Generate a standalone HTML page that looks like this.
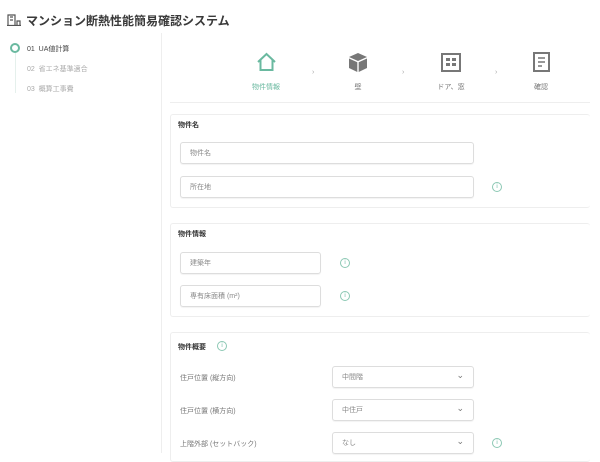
<!DOCTYPE html>
<html><head><meta charset="utf-8"><style>
*{box-sizing:border-box;margin:0;padding:0}
body{width:600px;height:451px;overflow:hidden;background:#fff;font-family:"Liberation Sans","Noto Sans CJK JP",sans-serif;color:#333;position:relative}
.a{position:absolute}
.t{font-size:7px;color:#666}
.card{position:absolute;left:170px;width:420px;border:1px solid #eee;border-right:none;border-radius:3px;background:#fff}
.h{position:absolute;font-size:7px;font-weight:bold;color:#333}
.in{position:absolute;border:1px solid #ddd;border-radius:3px;font-size:7px;color:#888;padding-left:9px;display:flex;align-items:center;box-shadow:0 1px 1px rgba(0,0,0,.05)}
.sel::after{content:"⌄";position:absolute;right:9px;top:3px;font-size:9px;color:#777}
.i{position:absolute;width:10px;height:10px;border:1px solid #8cc8b4;border-radius:50%;color:#6ab9a0;font-size:6px;line-height:8px;text-align:center}
.lab{position:absolute;font-size:7px;color:#777;top:0}
.sl{position:absolute;font-size:7px;color:#777;top:82px;text-align:center;width:60px}
.ch{position:absolute;top:69px;font-size:7px;color:#aaa}
</style></head><body>
<svg class="a" style="left:7px;top:13px" width="14" height="13" viewBox="0 0 14 13"><path d="M1 12V2h7v10M3 4h3M3 7h3M10 12V8h3v4M0 12.5h14" stroke="#555" stroke-width="1.2" fill="none"/></svg>
<div class="a" style="left:26px;top:12px;font-size:12px;font-weight:bold;color:#3a3a3a">マンション断熱性能簡易確認システム</div>
<div class="a" style="left:10px;top:43px;width:10px;height:10px;border:2px solid #6ab9a0;border-radius:50%"></div>
<div class="a" style="left:14.5px;top:53px;width:1px;height:40px;background:#e5f0ec"></div>
<div class="a t" style="left:27px;top:44px;color:#444">01&nbsp; UA値計算</div>
<div class="a t" style="left:27px;top:64px;color:#aaa">02&nbsp; 省エネ基準適合</div>
<div class="a t" style="left:27px;top:84px;color:#aaa">03&nbsp; 概算工事費</div>
<div class="a" style="left:161px;top:33px;width:1px;height:420px;background:#eee"></div>
<div class="a" style="left:170px;top:102px;width:420px;height:1px;background:#eee"></div>
<svg class="a" style="left:256px;top:52px" width="21" height="20" viewBox="0 0 21 20"><path d="M2 10L10.5 2L19 10M4.5 8v10h12V8" stroke="#6ab9a0" stroke-width="2" fill="none"/></svg>
<svg class="a" style="left:348px;top:52px" width="20" height="21" viewBox="0 0 20 21"><path d="M10 1L19 5L10 9L1 5Z" fill="#777"/><path d="M1 6.5L9.3 10.3V20L1 16Z M19 6.5L10.7 10.3V20L19 16Z" fill="#777"/></svg>
<svg class="a" style="left:441px;top:53px" width="20" height="19" viewBox="0 0 20 19"><rect x="1" y="1" width="18" height="17" stroke="#777" stroke-width="2" fill="none"/><rect x="5" y="5" width="4" height="3" fill="#777"/><rect x="11" y="5" width="4" height="3" fill="#777"/><rect x="5" y="10" width="4" height="3" fill="#777"/><rect x="11" y="10" width="4" height="3" fill="#777"/></svg>
<svg class="a" style="left:533px;top:52px" width="17" height="20" viewBox="0 0 17 20"><rect x="1" y="1" width="15" height="18" stroke="#777" stroke-width="2" fill="none"/><path d="M5 6h7M5 10h7M5 14h4" stroke="#777" stroke-width="1.5"/></svg>
<div class="sl" style="left:236px;color:#6ab9a0">物件情報</div>
<div class="sl" style="left:328px">壁</div>
<div class="sl" style="left:421px">ドア、窓</div>
<div class="sl" style="left:511px">確認</div>
<div class="ch" style="left:312px">›</div><div class="ch" style="left:402px">›</div><div class="ch" style="left:495px">›</div>

<div class="card" style="top:114px;height:94px"></div>
<div class="h" style="left:178px;top:120px">物件名</div>
<div class="in" style="left:180px;top:142px;width:294px;height:22px">物件名</div>
<div class="in" style="left:180px;top:176px;width:294px;height:22px">所在地</div>
<div class="i" style="left:492px;top:182px">i</div>

<div class="card" style="top:223px;height:94px"></div>
<div class="h" style="left:178px;top:229px">物件情報</div>
<div class="in" style="left:180px;top:252px;width:141px;height:22px">建築年</div>
<div class="in" style="left:180px;top:285px;width:141px;height:22px">専有床面積 (m²)</div>
<div class="i" style="left:340px;top:258px">i</div>
<div class="i" style="left:340px;top:291px">i</div>

<div class="card" style="top:332px;height:130px"></div>
<div class="h" style="left:178px;top:342px">物件概要</div>
<div class="i" style="left:217px;top:341px">i</div>
<div class="lab" style="left:180px;top:373px">住戸位置 (縦方向)</div>
<div class="lab" style="left:180px;top:406px">住戸位置 (横方向)</div>
<div class="lab" style="left:180px;top:439px">上階外部 (セットバック)</div>
<div class="in sel" style="left:332px;top:366px;width:142px;height:22px">中間階</div>
<div class="in sel" style="left:332px;top:399px;width:142px;height:22px">中住戸</div>
<div class="in sel" style="left:332px;top:432px;width:142px;height:22px">なし</div>
<div class="i" style="left:492px;top:438px">i</div>
</body></html>
